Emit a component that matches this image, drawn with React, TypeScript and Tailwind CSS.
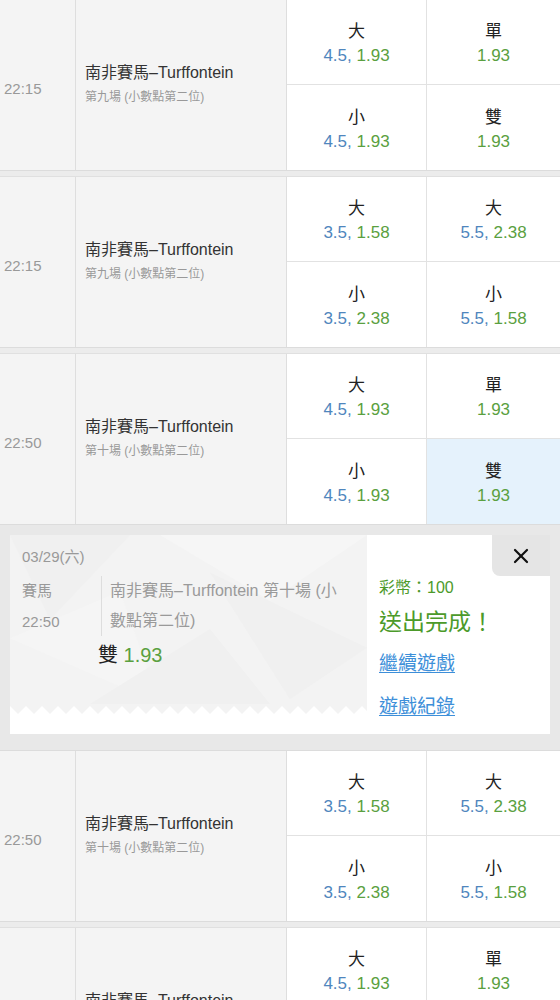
import React from 'react';
import { X } from 'lucide-react';

const font = { fontFamily: '"Liberation Sans", "Noto Sans CJK TC", sans-serif' };

type Cell = { label: string; line?: string; odds: string; active?: boolean };

interface RaceRow {
  time: string;
  race: string;
  cells: Cell[];
}

const oddEven = (race: string, active = false): RaceRow => ({
  time: race === '第九場' ? '22:15' : '22:50',
  race,
  cells: [
    { label: '大', line: '4.5', odds: '1.93' },
    { label: '單', odds: '1.93' },
    { label: '小', line: '4.5', odds: '1.93' },
    { label: '雙', odds: '1.93', active },
  ],
});

const overUnder = (race: string): RaceRow => ({
  time: race === '第九場' ? '22:15' : '22:50',
  race,
  cells: [
    { label: '大', line: '3.5', odds: '1.58' },
    { label: '大', line: '5.5', odds: '2.38' },
    { label: '小', line: '3.5', odds: '2.38' },
    { label: '小', line: '5.5', odds: '1.58' },
  ],
});

const OddsCell = ({ cell, bottom, right }: { cell: Cell; bottom?: boolean; right?: boolean }) => (
  <div
    className={`flex h-[85px] flex-col items-center justify-center pt-1 ${cell.active ? 'bg-[#e5f2fc]' : 'bg-white'} ${bottom ? '' : 'border-b border-[#e2e2e2]'} ${right ? '' : 'border-r border-[#e2e2e2]'}`}
  >
    <span className="text-[17px] leading-6 text-[#222]">{cell.label}</span>
    <span className="text-[17px] leading-6">
      {cell.line && <span className="text-[#4f86bd]">{cell.line}, </span>}
      <span className="text-[#5aa040]">{cell.odds}</span>
    </span>
  </div>
);

const Row = ({ row }: { row: RaceRow }) => (
  <div className="grid grid-cols-[76px_211px_140px_1fr] border-b border-[#dcdcdc] bg-[#f4f4f4]">
    <div className="flex h-[170px] items-center border-r border-[#dedede] pl-1 pt-2 text-[15px] text-[#999]">
      {row.time}
    </div>
    <div className="flex flex-col justify-center border-r border-[#dedede] pl-[9px]">
      <span className="text-[16px] leading-6 text-[#333]">南非賽馬–Turffontein</span>
      <span className="text-[12px] leading-6 text-[#999]">{row.race} (小數點第二位)</span>
    </div>
    <div className="flex flex-col">
      <OddsCell cell={row.cells[0]} />
      <OddsCell cell={row.cells[2]} bottom />
    </div>
    <div className="flex flex-col">
      <OddsCell cell={row.cells[1]} right />
      <OddsCell cell={row.cells[3]} bottom right />
    </div>
  </div>
);

const Band = () => <div className="h-[6px] border-b border-[#e0e0e0] bg-[#ececec]" />;

const TicketPattern = () => (
  <svg className="absolute inset-0 h-full w-full" viewBox="0 0 357 180" preserveAspectRatio="none">
    <polygon points="0,0 120,0 40,90" fill="#f0f0f0" />
    <polygon points="150,0 357,0 260,70" fill="#f6f6f6" />
    <polygon points="200,40 357,120 280,175" fill="#f0f0f0" />
    <polygon points="0,110 110,60 150,180" fill="#f5f5f5" />
    <polygon points="80,180 200,100 260,180" fill="#f0f0f0" />
  </svg>
);

const Zigzag = () => {
  const pts: string[] = [];
  const w = 357;
  const step = 16;
  for (let x = 0; x <= w + step; x += step) {
    pts.push(`${x},2`);
    pts.push(`${x + step / 2},10`);
  }
  pts.push(`${w + step},14`, `0,14`);
  return (
    <svg className="block h-[14px] w-full" viewBox="0 0 357 14" preserveAspectRatio="none">
      <rect x="0" y="0" width="357" height="14" fill="#f3f3f3" />
      <polygon points={pts.join(' ')} fill="#ffffff" />
    </svg>
  );
};

const Receipt = () => (
  <div className="border-b border-[#dcdcdc] bg-[#e8e8e8] px-[10px] pt-[10px] pb-[16px]">
    <div className="flex h-[199px] bg-white">
      <div className="flex w-[357px] flex-col">
        <div className="relative flex-1 bg-[#f3f3f3]">
          <TicketPattern />
          <div className="relative pl-3 pt-[12px]">
            <div className="text-[15px] leading-5 text-[#999]">03/29(六)</div>
            <div className="mt-[14px] flex">
              <div className="flex w-[79px] flex-col gap-[11px] text-[15px] leading-5 text-[#999]">
                <span>賽馬</span>
                <span>22:50</span>
              </div>
              <div className="-mt-[5px] border-l border-[#dddddd] pl-[8px] text-[16px] leading-[30px] text-[#9a9a9a]">
                南非賽馬–Turffontein 第十場 (小
                <br />
                數點第二位)
              </div>
            </div>
            <div className="mt-[5px] pl-[76px] text-[20px] leading-7">
              <span className="text-[#222]">雙</span> <span className="text-[#5aa040]">1.93</span>
            </div>
          </div>
        </div>
        <Zigzag />
        <div className="h-[16px] bg-white" />
      </div>
      <div className="relative flex-1 pl-3 pt-[41px]">
        <div className="absolute right-0 top-0 flex h-[41px] w-[58px] items-center justify-center rounded-bl-[8px] bg-[#e5e5e5]">
          <X className="h-6 w-6 text-[#111]" strokeWidth={2.2} />
        </div>
        <div className="text-[16px] leading-6 text-[#4c9a2a]">彩幣：100</div>
        <div className="mt-[6px] text-[23px] leading-8 text-[#4c9a2a]">送出完成！</div>
        <div className="mt-[14px] text-[19px] leading-6 text-[#3d8fd9] underline underline-offset-2">繼續遊戲</div>
        <div className="mt-[19px] text-[19px] leading-6 text-[#3d8fd9] underline underline-offset-2">遊戲紀錄</div>
      </div>
    </div>
  </div>
);

export default function App() {
  return (
    <div className="h-[1000px] w-[560px] overflow-hidden bg-[#f4f4f4]" style={font}>
      <Row row={oddEven('第九場')} />
      <Band />
      <Row row={overUnder('第九場')} />
      <Band />
      <Row row={oddEven('第十場', true)} />
      <Receipt />
      <Row row={overUnder('第十場')} />
      <Band />
      <Row row={oddEven('第十一場')} />
    </div>
  );
}
